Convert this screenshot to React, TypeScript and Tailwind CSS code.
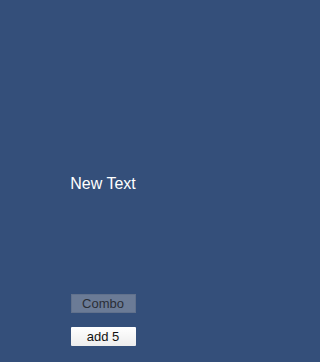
import React from 'react';

const App: React.FC = () => {
    return (
        <div className="w-full h-[362px] bg-[#344f7a] overflow-hidden font-['Liberation_Sans',Arial,sans-serif]">
            <div className="w-[206px] h-full flex flex-col items-center">
                {/* Label */}
                <div className="pt-[174px] text-[16px] leading-[19px] text-white">New Text</div>

                {/* Controls */}
                <div className="mt-[101px] flex flex-col items-center gap-[14px]">
                    <button className="w-[65px] h-[19px] bg-[#6b7b96] border border-[#61718c] text-[13px] leading-none text-[#2a2e36] flex items-center justify-center">
                        Combo
                    </button>
                    <button className="w-[65px] h-[19px] bg-gradient-to-b from-white to-[#ededed] rounded-[1px] text-[13px] leading-none text-[#111] flex items-center justify-center">
                        add 5
                    </button>
                </div>
            </div>
        </div>
    );
};

export default App;
